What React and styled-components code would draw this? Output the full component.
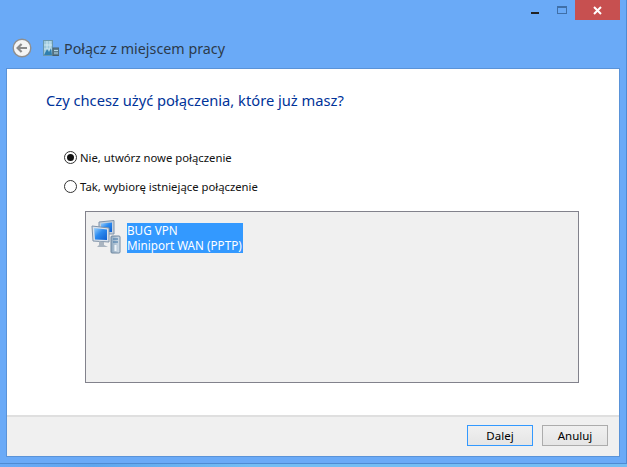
import React from 'react'
import styled, { createGlobalStyle } from 'styled-components'

const GlobalStyle = createGlobalStyle`
  html, body {
    margin: 0;
    padding: 0;
    background: #6aaaf7;
  }
  * {
    box-sizing: border-box;
  }
`

const Frame = styled.div`
  width: 627px;
  height: 467px;
  display: flex;
  flex-direction: column;
  overflow: hidden;
  background: #6aaaf7;
  font-family: 'Noto Sans', 'Open Sans', sans-serif;
`

const Window = styled.div`
  height: 464px;
  display: flex;
  flex-direction: column;
  padding: 0 6px 6px 6px;
  border-right: 1px solid #4f8bd2;
  border-bottom: 1px solid #4f8bd2;
`

const Strip = styled.div`
  flex: 1;
  background: linear-gradient(90deg, #6aaaf7 0%, #5fa6ee 15%, #74bdf4 40%, #74bdf4 100%);
`

const TitleBar = styled.div`
  height: 28px;
  display: flex;
  justify-content: flex-end;
  flex: none;
`

const Caption = styled.div`
  width: ${p => p.$width}px;
  height: 20px;
  display: flex;
  align-items: center;
  justify-content: center;
  background: ${p => p.$close ? '#c75050' : 'transparent'};
`

const NavBar = styled.div`
  height: 40px;
  flex: none;
  display: flex;
  align-items: center;
  gap: 11px;
  padding: 0 0 0 6px;
`

const NavTitle = styled.span`
  font-size: 14.3px;
  color: #2c3a4a;
  margin-left: -6px;
`

const Panel = styled.div`
  flex: 1;
  display: flex;
  flex-direction: column;
  background: #fff;
  border: 1px solid #5a93d8;
`

const Body = styled.div`
  flex: 1;
  padding: 20px 40px 0 39px;
`

const Heading = styled.h1`
  margin: 0;
  font-size: 14.7px;
  line-height: 22px;
  font-weight: 400;
  color: #003399;
`

const Options = styled.div`
  display: flex;
  flex-direction: column;
  gap: 13px;
  margin: 38px 0 0 18px;
`

const Option = styled.label`
  display: flex;
  align-items: center;
  gap: 3px;
  height: 16px;
  font-size: 11.3px;
  color: #111;
`

const Radio = styled.span`
  width: 13px;
  height: 13px;
  border-radius: 50%;
  border: 1px solid #333;
  background: #fff;
  display: flex;
  align-items: center;
  justify-content: center;
  flex: none;
  &::after {
    content: '';
    display: ${p => p.$checked ? 'block' : 'none'};
    width: 7px;
    height: 7px;
    border-radius: 50%;
    background: #111;
  }
`

const ListBox = styled.div`
  width: 494px;
  height: 172px;
  margin: 17px 0 0 39px;
  padding: 8px 5px;
  background: #f0f0f0;
  border: 1px solid #82828c;
  display: flex;
  align-items: flex-start;
  gap: 4px;
`

const ItemText = styled.div`
  display: flex;
  flex-direction: column;
  align-items: flex-start;
  margin-top: 3px;
`

const ItemLine = styled.span`
  background: #3399ff;
  color: #fff;
  font-size: 11.7px;
  line-height: 15px;
  width: 116px;
  white-space: nowrap;
`

const Footer = styled.div`
  height: 41px;
  flex: none;
  background: #f0f0f0;
  border-top: 2px solid #dfdfdf;
  display: flex;
  justify-content: flex-end;
  align-items: flex-start;
  gap: 9px;
  padding: 8px 11px 0 0;
`

const Button = styled.button`
  width: 66px;
  height: 21px;
  padding: 0;
  font-family: inherit;
  font-size: 11.5px;
  color: #000;
  background: linear-gradient(#f0f0f0, #e5e5e5);
  border: 1px solid ${p => p.$primary ? '#3399ff' : '#acacac'};
`

const BackIcon = () => (
  <svg width="20" height="20" viewBox="0 0 20 20">
    <circle cx="10" cy="10" r="8.8" fill="#f4f4f4" stroke="#8f8f8f" strokeWidth="1.4" />
    <path d="M15 10H6M9.6 6L5.6 10L9.6 14" fill="none" stroke="#8a8a8a" strokeWidth="2.2" />
  </svg>
)

const WorkplaceIcon = () => (
  <svg width="16" height="16" viewBox="0 0 16 16">
    <rect x="0.5" y="0.5" width="9" height="15" fill="#9cc8dc" stroke="#6a97ad" />
    <path d="M1 5H9M1 9H9M4 1V15M7 1V15" stroke="#d9eef5" strokeWidth="0.8" />
    <path d="M1 15L4 9L6 12L8 8L9 15Z" fill="#2f7fb0" />
    <rect x="10" y="8" width="6" height="7.5" fill="#5c7f92" stroke="#46606e" />
    <path d="M11 10.5H15M11 13H15" stroke="#b6d8e6" />
  </svg>
)

const NetworkIcon = () => (
  <svg width="32" height="34" viewBox="0 0 32 34">
    <defs>
      <linearGradient id="screen" x1="0" y1="0" x2="1" y2="1">
        <stop offset="0" stopColor="#9fd2fb" />
        <stop offset="0.45" stopColor="#2c8bf0" />
        <stop offset="1" stopColor="#0f5fcf" />
      </linearGradient>
      <linearGradient id="tower" x1="0" y1="0" x2="1" y2="0">
        <stop offset="0" stopColor="#8fa9c0" />
        <stop offset="1" stopColor="#d5e0ea" />
      </linearGradient>
    </defs>
    <path d="M8 2L23 0.5V14L8 14Z" fill="#c4d0de" stroke="#7f92a8" />
    <path d="M10 3.5L21 2.5V12L10 12Z" fill="url(#screen)" />
    <path d="M1 6L18 8V22L2 21Z" fill="#dbe3ec" stroke="#7f92a8" />
    <path d="M3 8L16 9.5V20L4 19.5Z" fill="url(#screen)" />
    <path d="M8 21L13 22V25L17 27H6L8 25Z" fill="#a9b4c0" />
    <rect x="20" y="16" width="9" height="17" rx="1" fill="url(#tower)" stroke="#7088a0" />
    <path d="M22 19H27M22 22H27" stroke="#3f74a6" />
    <path d="M24.5 25V31" stroke="#eef4f9" strokeWidth="2" />
  </svg>
)

export default function App() {
  return (
    <Frame>
      <GlobalStyle />
      <Window>
        <TitleBar>
          <Caption $width={26}>
            <svg width="10" height="8" viewBox="0 0 10 8"><rect x="1" y="6" width="8" height="2" fill="#222" /></svg>
          </Caption>
          <Caption $width={27}>
            <svg width="10" height="8" viewBox="0 0 10 8">
              <rect x="0.5" y="0.5" width="9" height="7" fill="none" stroke="#3f6fa8" />
              <rect x="0" y="0" width="10" height="2" fill="#3f6fa8" />
            </svg>
          </Caption>
          <Caption $width={45} $close>
            <svg width="9" height="9" viewBox="0 0 9 9">
              <path d="M1 1L8 8M8 1L1 8" stroke="#fff" strokeWidth="2" />
            </svg>
          </Caption>
        </TitleBar>
        <NavBar>
          <BackIcon />
          <WorkplaceIcon />
          <NavTitle>Połącz z miejscem pracy</NavTitle>
        </NavBar>
        <Panel>
          <Body>
            <Heading>Czy chcesz użyć połączenia, które już masz?</Heading>
            <Options>
              <Option><Radio $checked />Nie, utwórz nowe połączenie</Option>
              <Option><Radio />Tak, wybiorę istniejące połączenie</Option>
            </Options>
            <ListBox>
              <NetworkIcon />
              <ItemText>
                <ItemLine>BUG VPN</ItemLine>
                <ItemLine>Miniport WAN (PPTP)</ItemLine>
              </ItemText>
            </ListBox>
          </Body>
          <Footer>
            <Button $primary>Dalej</Button>
            <Button>Anuluj</Button>
          </Footer>
        </Panel>
      </Window>
      <Strip />
    </Frame>
  )
}
